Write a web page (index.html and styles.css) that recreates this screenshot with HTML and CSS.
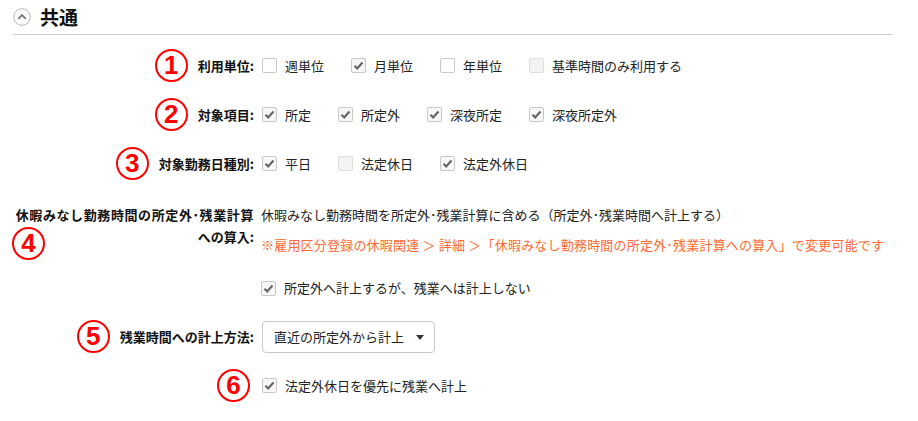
FILE: index.html
```html
<!DOCTYPE html>
<html>
<head>
  <meta charset="UTF-8">
  <title>共通設定</title>
  <meta name="viewport" content="width=device-width, initial-scale=1">
  <link rel="stylesheet" href="styles.css">
</head>
<body>

  <div class="section">
    <div class="section-head">
      <span class="toggle">
        <svg width="18" height="18" viewBox="0 0 18 18"><circle cx="9" cy="9" r="8.3" fill="#fff" stroke="#b5b5b5" stroke-width="1"/><path d="M5.3 10.8 L9 7 L12.7 10.8" fill="none" stroke="#777" stroke-width="1.9"/></svg>
      </span>
      <h2>共通</h2>
    </div>

    <div class="row">
      <div class="label"><span class="mark">1</span>利用単位:</div>
      <div class="field">
        <label class="check"><span class="box"></span>週単位</label>
        <label class="check"><span class="box on"><svg width="13" height="13" viewBox="0 0 13 13"><path d="M2.5 6.8 L5.2 9.5 L10.5 3.5" fill="none" stroke="#666" stroke-width="2.2"/></svg></span>月単位</label>
        <label class="check"><span class="box"></span>年単位</label>
        <label class="check"><span class="box off"></span>基準時間のみ利用する</label>
      </div>
    </div>

    <div class="row">
      <div class="label"><span class="mark">2</span>対象項目:</div>
      <div class="field">
        <label class="check"><span class="box on"><svg width="13" height="13" viewBox="0 0 13 13"><path d="M2.5 6.8 L5.2 9.5 L10.5 3.5" fill="none" stroke="#666" stroke-width="2.2"/></svg></span>所定</label>
        <label class="check"><span class="box on"><svg width="13" height="13" viewBox="0 0 13 13"><path d="M2.5 6.8 L5.2 9.5 L10.5 3.5" fill="none" stroke="#666" stroke-width="2.2"/></svg></span>所定外</label>
        <label class="check"><span class="box on"><svg width="13" height="13" viewBox="0 0 13 13"><path d="M2.5 6.8 L5.2 9.5 L10.5 3.5" fill="none" stroke="#666" stroke-width="2.2"/></svg></span>深夜所定</label>
        <label class="check"><span class="box on"><svg width="13" height="13" viewBox="0 0 13 13"><path d="M2.5 6.8 L5.2 9.5 L10.5 3.5" fill="none" stroke="#666" stroke-width="2.2"/></svg></span>深夜所定外</label>
      </div>
    </div>

    <div class="row">
      <div class="label"><span class="mark">3</span>対象勤務日種別:</div>
      <div class="field">
        <label class="check"><span class="box on"><svg width="13" height="13" viewBox="0 0 13 13"><path d="M2.5 6.8 L5.2 9.5 L10.5 3.5" fill="none" stroke="#666" stroke-width="2.2"/></svg></span>平日</label>
        <label class="check"><span class="box off"></span>法定休日</label>
        <label class="check"><span class="box on"><svg width="13" height="13" viewBox="0 0 13 13"><path d="M2.5 6.8 L5.2 9.5 L10.5 3.5" fill="none" stroke="#666" stroke-width="2.2"/></svg></span>法定外休日</label>
      </div>
    </div>

    <div class="row row-tall">
      <div class="label label-wrap">
        <div>休暇みなし勤務時間の所定外･残業計算</div>
        <div class="label-end"><span class="mark mark-float">4</span>への算入:</div>
      </div>
      <div class="field field-col">
        <div class="line">休暇みなし勤務時間を所定外･残業計算に含める（所定外･残業時間へ計上する）</div>
        <div class="line note">※雇用区分登録の休暇関連 ＞ 詳細 ＞「休暇みなし勤務時間の所定外･残業計算への算入」で変更可能です</div>
        <div class="line sub">
          <label class="check"><span class="box on"><svg width="13" height="13" viewBox="0 0 13 13"><path d="M2.5 6.8 L5.2 9.5 L10.5 3.5" fill="none" stroke="#666" stroke-width="2.2"/></svg></span>所定外へ計上するが、残業へは計上しない</label>
        </div>
      </div>
    </div>

    <div class="row">
      <div class="label"><span class="mark">5</span>残業時間への計上方法:</div>
      <div class="field">
        <div class="select">直近の所定外から計上<span class="caret"></span></div>
      </div>
    </div>

    <div class="row">
      <div class="label"><span class="mark mark-end">6</span></div>
      <div class="field">
        <label class="check"><span class="box on"><svg width="13" height="13" viewBox="0 0 13 13"><path d="M2.5 6.8 L5.2 9.5 L10.5 3.5" fill="none" stroke="#666" stroke-width="2.2"/></svg></span>法定外休日を優先に残業へ計上</label>
      </div>
    </div>
  </div>

</body>
</html>
```

FILE: styles.css
```css
body {
  margin: 0;
  font-family: "Noto Sans CJK JP", "Noto Sans", sans-serif;
  font-size: 13px;
  color: #222;
  background: #fff;
}
.section {
  width: 880px;
  margin-left: 13px;
}
.section-head {
  display: flex;
  align-items: center;
  height: 35px;
  border-bottom: 1px solid #ccc;
  box-sizing: border-box;
}
.toggle {
  display: flex;
  width: 18px;
  height: 18px;
  margin-right: 9px;
  margin-top: -1px;
}
.section-head h2 {
  margin: 0;
  margin-top: -2px;
  font-size: 19px;
  font-weight: bold;
  color: #111;
}
.row {
  display: flex;
  align-items: center;
  min-height: 49px;
  position: relative;
}
.row:nth-child(2) {
  margin-top: 6px;
}
.label {
  width: 241px;
  flex: none;
  display: flex;
  align-items: center;
  justify-content: flex-end;
  font-weight: bold;
  color: #111;
  padding-right: 8px;
}
.label-wrap {
  display: block;
  text-align: right;
  line-height: 22px;
  letter-spacing: 0.6px;
  margin-right: -1px;
  position: relative;
}
.label-end {
  letter-spacing: 0;
}
.field {
  display: flex;
  align-items: center;
}
.check {
  display: flex;
  align-items: center;
  margin-right: 27px;
}
.box {
  width: 15px;
  height: 15px;
  box-sizing: border-box;
  border: 1px solid #c8c8c8;
  border-radius: 2px;
  background: #fff;
  margin-right: 8px;
  display: flex;
  align-items: center;
  justify-content: center;
}
.box.on {
  background: #f7f7f7;
}
.box.off {
  background: #f3f3f3;
  border-color: #dedede;
}
.mark {
  width: 33px;
  height: 33px;
  box-sizing: border-box;
  border: 2.5px solid #f00;
  border-radius: 50%;
  color: #f00;
  font-family: "Liberation Sans", sans-serif;
  font-weight: bold;
  font-size: 26px;
  line-height: 28px;
  text-align: center;
  margin-right: 10px;
  flex: none;
  letter-spacing: 0;
}
.mark-end {
  margin-right: 4px;
}
.mark-float {
  position: absolute;
  left: -1px;
  top: 23px;
}
.row-tall {
  align-items: flex-start;
  padding: 16px 0 13px;
}
.field-col {
  flex-direction: column;
  align-items: flex-start;
}
.line {
  line-height: 22px;
}
.note {
  color: #ff6a33;
  margin-top: 8px;
  letter-spacing: 0.2px;
}
.sub {
  margin-top: 21px;
}
.select {
  width: 173px;
  height: 32px;
  box-sizing: border-box;
  border: 1px solid #c8c8c8;
  border-radius: 4px;
  display: flex;
  align-items: center;
  padding-left: 11px;
  color: #222;
  position: relative;
}
.caret {
  position: absolute;
  right: 10px;
  top: 13px;
  border-left: 4px solid transparent;
  border-right: 4px solid transparent;
  border-top: 5px solid #333;
}
```
